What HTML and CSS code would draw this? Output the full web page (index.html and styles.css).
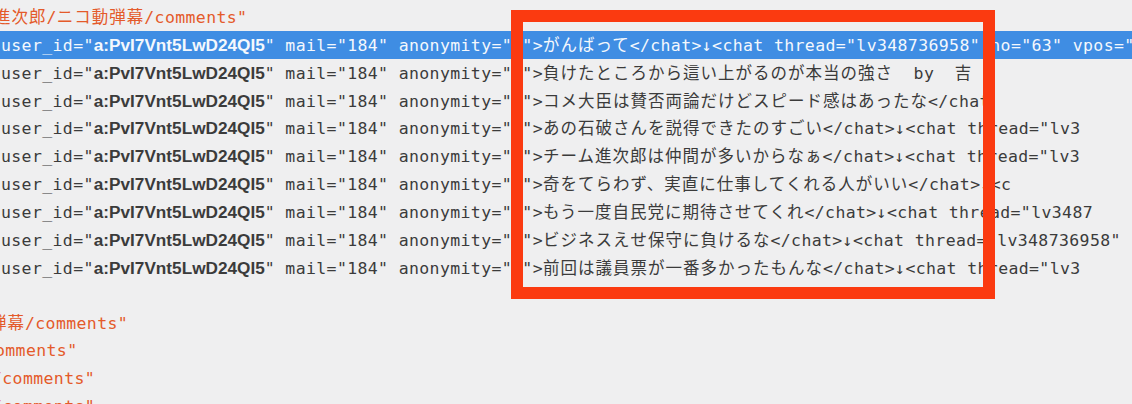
FILE: index.html
```html
<!DOCTYPE html>
<html lang="ja">
<head>
<meta charset="utf-8">
<title>comments</title>
<link rel="stylesheet" href="styles.css">
</head>
<body>
<div class="editor">
  <div class="code">
    <div class="line str t0"><span class="jp">進次郎</span>/<span class="jp">ニコ動弾幕</span>/comments"</div>
    <div class="line sel">user_id="<span class="id">a:PvI7Vnt5LwD24QI5</span>" mail="184" anonymity="1"&gt;<span class="jp">がんばって</span>&lt;/chat&gt;↓&lt;chat thread="lv348736958" no="63" vpos="</div>
    <div class="line">user_id="<span class="id">a:PvI7Vnt5LwD24QI5</span>" mail="184" anonymity="1"&gt;<span class="jp">負けたところから這い上がるのが本当の強さ</span>  by  <span class="jp">吉</span></div>
    <div class="line">user_id="<span class="id">a:PvI7Vnt5LwD24QI5</span>" mail="184" anonymity="1"&gt;<span class="jp">コメ大臣は賛否両論だけどスピード感はあったな</span>&lt;/chat</div>
    <div class="line">user_id="<span class="id">a:PvI7Vnt5LwD24QI5</span>" mail="184" anonymity="1"&gt;<span class="jp">あの石破さんを説得できたのすごい</span>&lt;/chat&gt;↓&lt;chat thread="lv3</div>
    <div class="line">user_id="<span class="id">a:PvI7Vnt5LwD24QI5</span>" mail="184" anonymity="1"&gt;<span class="jp">チーム進次郎は仲間が多いからなぁ</span>&lt;/chat&gt;↓&lt;chat thread="lv3</div>
    <div class="line">user_id="<span class="id">a:PvI7Vnt5LwD24QI5</span>" mail="184" anonymity="1"&gt;<span class="jp">奇をてらわず、実直に仕事してくれる人がいい</span>&lt;/chat&gt;↓&lt;c</div>
    <div class="line">user_id="<span class="id">a:PvI7Vnt5LwD24QI5</span>" mail="184" anonymity="1"&gt;<span class="jp">もう一度自民党に期待させてくれ</span>&lt;/chat&gt;↓&lt;chat thread="lv3487</div>
    <div class="line">user_id="<span class="id">a:PvI7Vnt5LwD24QI5</span>" mail="184" anonymity="1"&gt;<span class="jp">ビジネスえせ保守に負けるな</span>&lt;/chat&gt;↓&lt;chat thread="lv348736958"</div>
    <div class="line">user_id="<span class="id">a:PvI7Vnt5LwD24QI5</span>" mail="184" anonymity="1"&gt;<span class="jp">前回は議員票が一番多かったもんな</span>&lt;/chat&gt;↓&lt;chat thread="lv3</div>
    <div class="line blank"> </div>
    <div class="line str t1"><span class="jp">弾幕</span>/comments"</div>
    <div class="line str t2">omments"</div>
    <div class="line str t3">/comments"</div>
    <div class="line str t3">/comments"</div>
  </div>
  <div class="callout"></div>
</div>
</body>
</html>
```
FILE: styles.css
```css
html, body {
  margin: 0;
  padding: 0;
  background: #efeff0;
}
.editor {
  position: relative;
  width: 1132px;
  height: 404px;
  overflow: hidden;
  background: #efeff0;
}
.code {
  padding-top: 3px;
  font-family: "DejaVu Sans Mono", "Noto Sans CJK JP", monospace;
  font-size: 16.5px;
  letter-spacing: 0.37px;
  color: #3b3b3b;
}
.line {
  height: 27.85px;
  line-height: 27.85px;
  white-space: pre;
  overflow: hidden;
  padding-left: 1px;
}
.jp {
  font-family: "Noto Sans CJK JP", sans-serif;
  letter-spacing: 1px;
}
.id {
  font-family: "Liberation Sans", Arial, sans-serif;
  font-weight: 700;
  font-size: 17.2px;
  letter-spacing: 0;
}
.sel {
  background: #3f8de3;
  color: #f4f8fd;
}
.str {
  color: #e45a2a;
}
.t0 { text-indent: -7px; }
.t1 { text-indent: -11px; }
.t2 { text-indent: -6px; }
.t3 { text-indent: -9px; }
.callout {
  position: absolute;
  left: 511px;
  top: 10px;
  width: 484px;
  height: 289px;
  box-sizing: border-box;
  border: 12px solid #fb3a10;
}
```
